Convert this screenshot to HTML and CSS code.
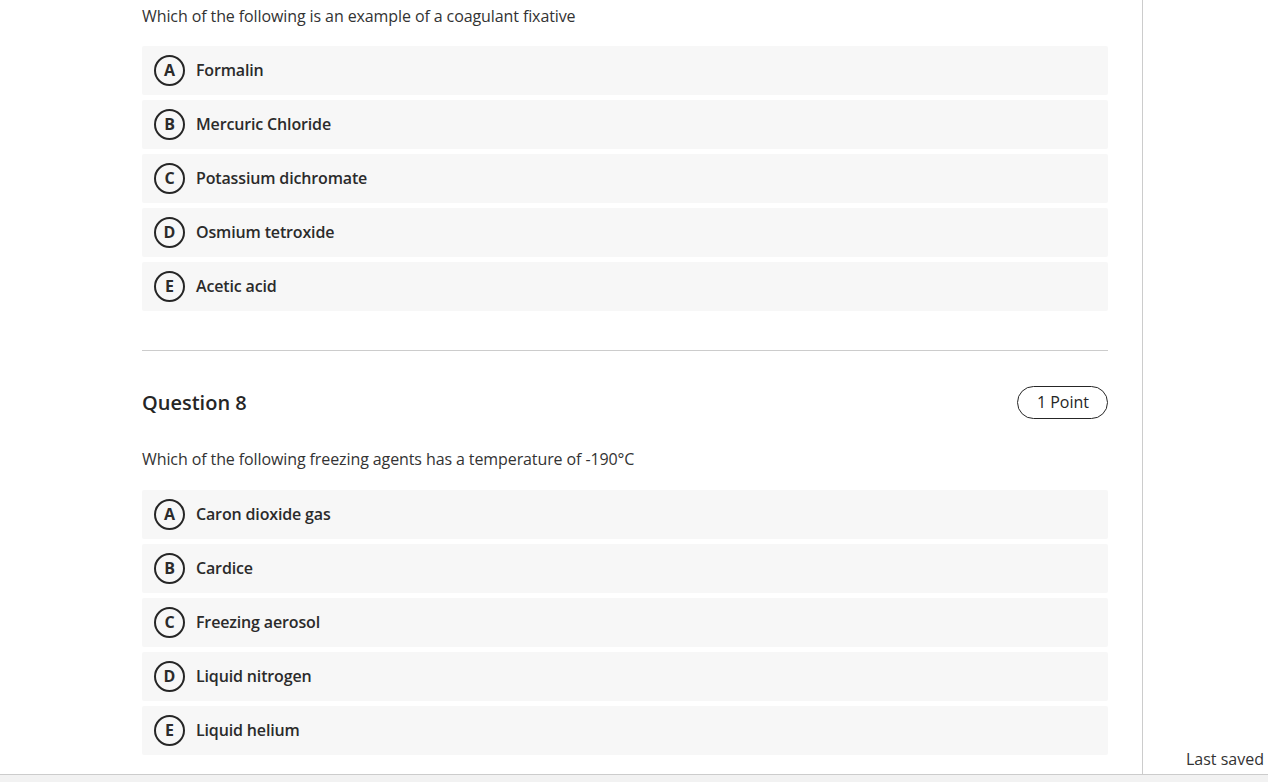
FILE: index.html
```html
<!DOCTYPE html>
<html lang="en">
<head>
  <meta charset="UTF-8">
  <title>Quiz</title>
  <link rel="stylesheet" href="styles.css">
</head>
<body>
<div class="page">
  <div class="main">
    <div class="question">
      <p class="prompt">Which of the following is an example of a coagulant fixative</p>
      <ul class="options">
        <li><span class="letter">A</span>Formalin</li>
        <li><span class="letter">B</span>Mercuric Chloride</li>
        <li><span class="letter">C</span>Potassium dichromate</li>
        <li><span class="letter">D</span>Osmium tetroxide</li>
        <li><span class="letter">E</span>Acetic acid</li>
      </ul>
    </div>
    <hr class="rule">
    <div class="question">
      <div class="head">
        <h2 class="title">Question 8</h2>
        <span class="points">1 Point</span>
      </div>
      <p class="prompt">Which of the following freezing agents has a temperature of -190°C</p>
      <ul class="options">
        <li><span class="letter">A</span>Caron dioxide gas</li>
        <li><span class="letter">B</span>Cardice</li>
        <li><span class="letter">C</span>Freezing aerosol</li>
        <li><span class="letter">D</span>Liquid nitrogen</li>
        <li><span class="letter">E</span>Liquid helium</li>
      </ul>
    </div>
  </div>
  <div class="side">
    <span class="saved">Last saved</span>
  </div>
</div>
<div class="footer"></div>
</body>
</html>
```

FILE: styles.css
```css
* {
  margin: 0;
  padding: 0;
  box-sizing: border-box;
}
html, body {
  height: 100%;
}
body {
  font-family: "Open Sans", "Liberation Sans", sans-serif;
  color: #262626;
  background: #fff;
  overflow: hidden;
  display: flex;
  flex-direction: column;
}
ul {
  list-style: none;
}
.page {
  display: flex;
  height: 774px;
}
.main {
  width: 1143px;
  padding: 4px 34px 0 142px;
  border-right: 1px solid #ccc;
}
.prompt {
  font-size: 16px;
  line-height: 24px;
  letter-spacing: -0.1px;
  color: #333;
}
.options {
  margin-top: 18px;
  display: flex;
  flex-direction: column;
  gap: 5px;
}
.question + .rule + .question .options {
  margin-top: 19px;
}
.options li {
  display: flex;
  align-items: center;
  height: 49px;
  padding: 0 0 1px 12px;
  background: #f7f7f7;
  border-radius: 2px;
  font-size: 16px;
  font-weight: 600;
  letter-spacing: -0.15px;
  color: #2b2b2b;
}
.letter {
  width: 31px;
  height: 31px;
  margin-right: 11px;
  border: 2px solid #262626;
  border-radius: 50%;
  display: flex;
  align-items: center;
  justify-content: center;
  font-size: 16px;
  font-weight: 700;
  letter-spacing: 0;
}
.rule {
  border: 0;
  border-top: 1px solid #ccc;
  margin: 39px 0 35px;
}
.head {
  display: flex;
  justify-content: space-between;
  align-items: center;
  height: 33px;
  margin-bottom: 28px;
}
.title {
  font-size: 20px;
  font-weight: 600;
  color: #262626;
}
.points {
  display: inline-block;
  height: 33px;
  padding: 0 18px 0 19px;
  line-height: 31px;
  border: 1px solid #262626;
  border-radius: 17px;
  font-size: 16px;
}
.side {
  flex: 1;
  display: flex;
  align-items: flex-end;
  justify-content: flex-end;
  padding: 0 4px 4px 0;
}
.saved {
  font-size: 16px;
  color: #333;
}
.footer {
  flex: 1;
  background: #f2f2f2;
  border-top: 1px solid #ccc;
}
```
